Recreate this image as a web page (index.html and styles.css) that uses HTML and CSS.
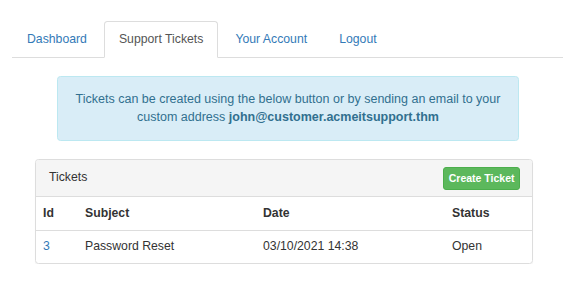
FILE: index.html
```html
<!DOCTYPE html>
<html lang="en">
  <head>
    <meta charset="UTF-8" />
    <meta name="viewport" content="width=device-width, initial-scale=1.0" />
    <title>Support Tickets</title>
    <link rel="stylesheet" href="styles.css">
  </head>

  <body>
    <ul class="nav-tabs">
      <li><a href="#">Dashboard</a></li>
      <li class="active"><a href="#">Support Tickets</a></li>
      <li><a href="#">Your Account</a></li>
      <li><a href="#">Logout</a></li>
    </ul>

    <div class="alert-info">
      Tickets can be created using the below button or by sending an email to your
      custom address <strong>john@customer.acmeitsupport.thm</strong>
    </div>

    <div class="panel">
      <div class="panel-heading">
        <span>Tickets</span>
        <button class="btn-create">Create Ticket</button>
      </div>
      <table class="tickets">
        <colgroup>
          <col class="col-id" />
          <col class="col-subject" />
          <col class="col-date" />
          <col />
        </colgroup>
        <thead>
          <tr>
            <th>Id</th>
            <th>Subject</th>
            <th>Date</th>
            <th>Status</th>
          </tr>
        </thead>
        <tbody>
          <tr>
            <td><a href="#">3</a></td>
            <td>Password Reset</td>
            <td>03/10/2021 14:38</td>
            <td>Open</td>
          </tr>
        </tbody>
      </table>
    </div>
  </body>
</html>
```

FILE: styles.css
```css
body {
  margin: 0;
  background-color: #fff;
  color: #333;
  font-family: "Liberation Sans", Arial, sans-serif;
  font-size: 12.25px;
  line-height: 17.5px;
}

a {
  color: #337ab7;
  text-decoration: none;
}

.nav-tabs {
  display: flex;
  list-style: none;
  margin: 21px 1px 0 12px;
  padding: 0;
  border-bottom: 1px solid #ddd;
}

.nav-tabs li {
  margin-right: 2px;
  margin-bottom: -1px;
}

.nav-tabs a {
  display: block;
  padding: 8.75px 14px;
  border: 1px solid transparent;
  border-radius: 3.5px 3.5px 0 0;
}

.nav-tabs .active a {
  color: #555;
  background-color: #fff;
  border-color: #ddd;
  border-bottom-color: transparent;
}

.alert-info {
  box-sizing: border-box;
  width: 462px;
  margin: 18px 0 0 57px;
  padding: 14px 13px;
  background-color: #d9edf7;
  border: 1px solid #bce8f1;
  border-radius: 3.5px;
  color: #31708f;
  font-size: 12.5px;
  text-align: center;
}

.panel {
  box-sizing: border-box;
  width: 498px;
  margin: 18px 0 0 35px;
  border: 1px solid #ddd;
  border-radius: 3.5px;
  box-shadow: 0 1px 1px rgba(0, 0, 0, 0.05);
}

.panel-heading {
  display: flex;
  justify-content: space-between;
  align-items: center;
  padding: 6.5px 12px 6.5px 13px;
  background-color: #f5f5f5;
  border-bottom: 1px solid #ddd;
  border-radius: 3px 3px 0 0;
}

.btn-create {
  padding: 3px 4.5px;
  font-family: inherit;
  font-size: 10.5px;
  font-weight: bold;
  line-height: 15px;
  color: #fff;
  background-color: #5cb85c;
  border: 1px solid #4cae4c;
  border-radius: 3px;
  cursor: pointer;
}

.tickets {
  width: 100%;
  border-collapse: collapse;
}

.col-id {
  width: 42px;
}

.col-subject {
  width: 178px;
}

.col-date {
  width: 189px;
}

.tickets th,
.tickets td {
  padding: 7.5px 7px;
  text-align: left;
}

.tickets thead th {
  border-bottom: 1px solid #ddd;
}
```
